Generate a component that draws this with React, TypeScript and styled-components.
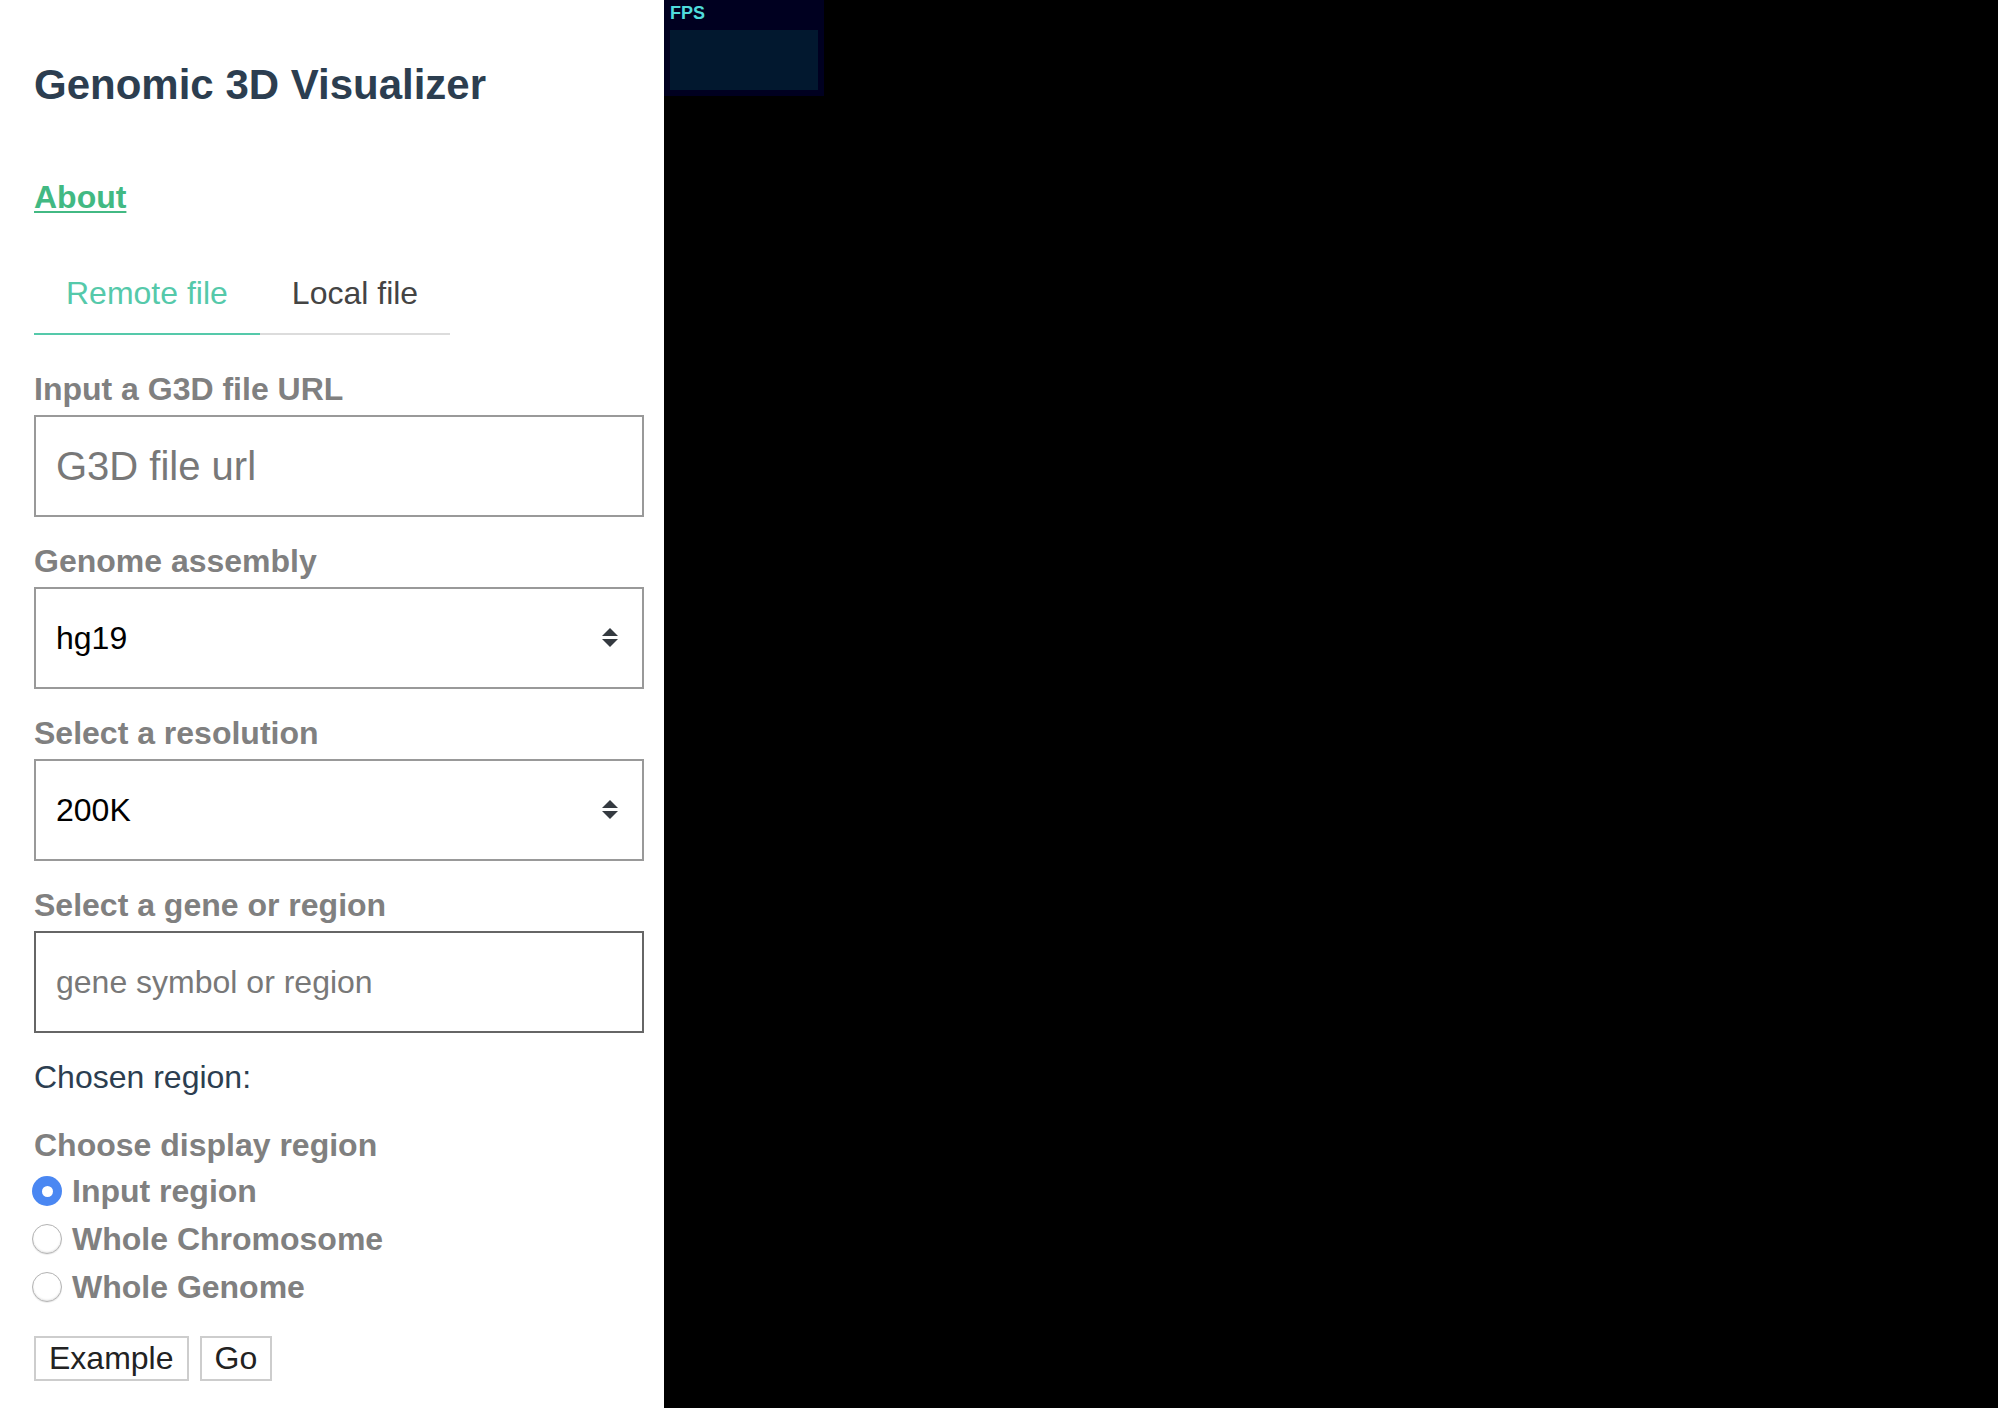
import React from "react";
import styled, { createGlobalStyle } from "styled-components";

const GlobalStyle = createGlobalStyle`
  html, body {
    margin: 0;
    padding: 0;
    background: #000;
  }
  body {
    font-family: "Liberation Sans", Arial, Helvetica, sans-serif;
  }
`

const Page = styled.div`
  display: flex;
  width: 100%;
  height: 1408px;
  overflow: hidden;
`

const Sidebar = styled.div`
  width: 664px;
  flex-shrink: 0;
  box-sizing: border-box;
  padding: 61px 20px 0 34px;
  background: #fff;
  display: flex;
  flex-direction: column;
`

const Title = styled.h1`
  margin: 0;
  font-size: 42px;
  line-height: 48px;
  font-weight: 700;
  color: #2c3e50;
`

const AboutLink = styled.a`
  align-self: flex-start;
  margin-top: 70px;
  font-size: 32px;
  line-height: 36px;
  font-weight: 700;
  color: #42b983;
  text-decoration: underline;
  text-underline-offset: 3px;
  text-decoration-thickness: 2px;
`

const Tabs = styled.div`
  display: flex;
  align-self: flex-start;
  margin-top: 60px;
  border-bottom: 2px solid #dcdcdc;
`

const Tab = styled.div<{ $active?: boolean }>`
  padding: 0 32px 22px;
  margin-bottom: -2px;
  font-size: 32px;
  line-height: 36px;
  color: ${p => (p.$active ? "#55c9aa" : "#444")};
  border-bottom: 2px solid ${p => (p.$active ? "#55c9aa" : "transparent")};
`

const Field = styled.div<{ $first?: boolean }>`
  display: flex;
  flex-direction: column;
  margin-top: ${p => (p.$first ? "36px" : "26px")};
`

const Label = styled.label`
  margin-bottom: 8px;
  font-size: 32px;
  line-height: 36px;
  font-weight: 700;
  color: #808080;
`

const TextInput = styled.input<{ $big?: boolean; $dark?: boolean }>`
  box-sizing: border-box;
  width: 100%;
  height: 102px;
  margin: 0;
  padding: 0 20px;
  border: 2px solid ${p => (p.$dark ? "#666" : "#999")};
  border-radius: 0;
  outline: none;
  background: #fff;
  font-family: "Liberation Sans", Arial, sans-serif;
  font-size: ${p => (p.$big ? "40px" : "32px")};
  color: #000;

  &::placeholder {
    color: #787878;
  }
`

const SelectWrap = styled.div`
  position: relative;
`

const Select = styled.select`
  box-sizing: border-box;
  width: 100%;
  height: 102px;
  margin: 0;
  padding: 0 20px;
  border: 2px solid #999;
  border-radius: 0;
  outline: none;
  background: #fff;
  appearance: none;
  -webkit-appearance: none;
  font-family: "Liberation Sans", Arial, sans-serif;
  font-size: 32px;
  color: #000;
`

const Arrows = styled.svg`
  position: absolute;
  right: 26px;
  top: 50%;
  transform: translateY(-50%);
  pointer-events: none;
`

const Chosen = styled.div`
  margin-top: 26px;
  font-size: 32px;
  line-height: 36px;
  color: #2c3e50;
`

const GroupTitle = styled.div`
  margin-top: 32px;
  font-size: 32px;
  line-height: 36px;
  font-weight: 700;
  color: #808080;
`

const RadioList = styled.div`
  display: flex;
  flex-direction: column;
  margin-top: 4px;
`

const RadioRow = styled.label`
  display: flex;
  align-items: center;
  gap: 10px;
  height: 48px;
  margin-left: -2px;
  font-size: 32px;
  font-weight: 700;
  color: #808080;
`

const RadioDot = styled.span<{ $checked?: boolean }>`
  box-sizing: border-box;
  width: 30px;
  height: 30px;
  border-radius: 50%;
  flex-shrink: 0;
  background: ${p => (p.$checked ? "#4a87f2" : "#fff")};
  border: ${p => (p.$checked ? "none" : "1px solid #b4b4b4")};
  box-shadow: ${p => (p.$checked ? "none" : "inset 0 -1px 2px rgba(0,0,0,0.12), 0 1px 1px rgba(0,0,0,0.08)")};
  display: flex;
  align-items: center;
  justify-content: center;

  &::after {
    content: "";
    display: ${p => (p.$checked ? "block" : "none")};
    width: 11px;
    height: 11px;
    border-radius: 50%;
    background: #fff;
  }
`

const Buttons = styled.div`
  display: flex;
  gap: 11px;
  margin-top: 25px;
`

const Button = styled.button`
  box-sizing: border-box;
  height: 45px;
  padding: 0 13px;
  border: 2px solid #cdcdcd;
  border-radius: 0;
  background: #fff;
  font-family: "Liberation Sans", Arial, sans-serif;
  font-size: 32px;
  color: #222;
`

const Viewer = styled.div`
  position: relative;
  flex: 1;
  background: #000;
`

const FpsPanel = styled.div`
  position: absolute;
  top: 0;
  left: 0;
  width: 160px;
  height: 96px;
  box-sizing: border-box;
  padding: 4px 6px 6px;
  background: #000020;
  display: flex;
  flex-direction: column;
`

const FpsLabel = styled.div`
  height: 26px;
  font-size: 18px;
  line-height: 18px;
  font-weight: 700;
  color: #4fdcdc;
`

const FpsGraph = styled.div`
  height: 60px;
  background: #02182f;
`

const SelectArrows = () => (
  <Arrows width="16" height="20" viewBox="0 0 16 20">
    <path d="M8 0 L16 8 L0 8 Z" fill="#343a40" />
    <path d="M0 11 L16 11 L8 19 Z" fill="#343a40" />
  </Arrows>
)

export default function App() {
  return (
    <>
      <GlobalStyle />
      <Page>
        <Sidebar>
          <Title>Genomic 3D Visualizer</Title>
          <AboutLink href="#">About</AboutLink>
          <Tabs>
            <Tab $active>Remote file</Tab>
            <Tab>Local file</Tab>
          </Tabs>

          <Field $first>
            <Label>Input a G3D file URL</Label>
            <TextInput $big placeholder="G3D file url" />
          </Field>

          <Field>
            <Label>Genome assembly</Label>
            <SelectWrap>
              <Select defaultValue="hg19">
                <option value="hg19">hg19</option>
                <option value="hg38">hg38</option>
                <option value="mm10">mm10</option>
              </Select>
              <SelectArrows />
            </SelectWrap>
          </Field>

          <Field>
            <Label>Select a resolution</Label>
            <SelectWrap>
              <Select defaultValue="200K">
                <option value="200K">200K</option>
                <option value="20K">20K</option>
              </Select>
              <SelectArrows />
            </SelectWrap>
          </Field>

          <Field>
            <Label>Select a gene or region</Label>
            <TextInput $dark placeholder="gene symbol or region" />
          </Field>

          <Chosen>Chosen region:</Chosen>

          <GroupTitle>Choose display region</GroupTitle>
          <RadioList>
            <RadioRow><RadioDot $checked />Input region</RadioRow>
            <RadioRow><RadioDot />Whole Chromosome</RadioRow>
            <RadioRow><RadioDot />Whole Genome</RadioRow>
          </RadioList>

          <Buttons>
            <Button>Example</Button>
            <Button>Go</Button>
          </Buttons>
        </Sidebar>

        <Viewer>
          <FpsPanel>
            <FpsLabel>FPS</FpsLabel>
            <FpsGraph />
          </FpsPanel>
        </Viewer>
      </Page>
    </>
  )
}
